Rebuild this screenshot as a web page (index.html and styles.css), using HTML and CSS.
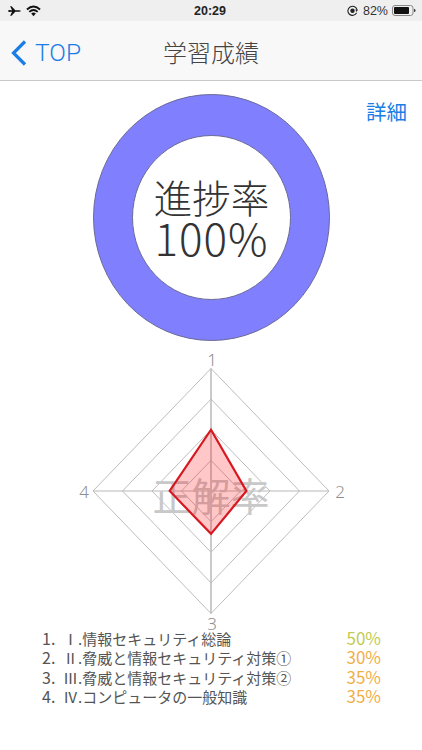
FILE: index.html
```html
<!DOCTYPE html>
<html lang="ja">
<head>
    <meta charset="UTF-8">
    <meta name="viewport" content="width=device-width, initial-scale=1.0">
    <title>学習成績</title>
    <link rel="stylesheet" href="styles.css">
</head>
<body>
    <div class="status-bar">
        <div class="status-left">
            <svg class="icon-plane" viewBox="0 0 16 12">
                <path d="M0 6 L1 4.800 L5 5 L2.600 0.300 L4.400 0.300 L9 5 L13.500 5 Q15.800 5.300 15.800 6 Q15.800 6.700 13.500 7 L9 7 L4.400 11.700 L2.600 11.700 L5 7 L1 7.200 Z"/>
            </svg>
            <svg class="icon-wifi" viewBox="0 0 16 12">
                <path class="wifi-arc" d="M1 4.400 Q8 -1.800 15 4.400"/>
                <path class="wifi-arc" d="M3.500 7 Q8 2.800 12.500 7"/>
                <path d="M5.500 8.700 Q8 6.400 10.500 8.700 L8 11.600 Z"/>
            </svg>
        </div>
        <div class="status-time">20:29</div>
        <div class="status-right">
            <svg class="icon-lock" viewBox="0 0 12 12">
                <path class="lock-ring" d="M10.500 8.500 A5 5 0 1 1 10.800 5"/>
                <path d="M9 5 L12 5 L10.500 7.500 Z"/>
                <circle cx="6" cy="6.200" r="2.400"/>
            </svg>
            <span>82%</span>
            <svg class="icon-battery" viewBox="0 0 24 11">
                <rect class="battery-shell" x="0.500" y="0.500" width="20.500" height="10" rx="2.500"/>
                <rect x="2" y="2" width="15" height="7" rx="1"/>
                <path d="M22.200 3.700 Q23.500 4.200 23.500 5.500 Q23.500 6.800 22.200 7.300 Z"/>
            </svg>
        </div>
    </div>

    <div class="nav-bar">
        <a class="nav-back">
            <svg class="icon-back" viewBox="0 0 18 28">
                <path d="M15 2.500 L3.500 14 L15 25.500"/>
            </svg>
            <span>TOP</span>
        </a>
        <div class="nav-title">学習成績</div>
    </div>

    <div class="content">
        <a class="detail-link">詳細</a>

        <div class="progress-chart">
            <svg viewBox="0 0 237 247">
                <ellipse class="ring" cx="118.500" cy="123.500" rx="118" ry="123"/>
                <ellipse class="ring-hole" cx="118.500" cy="123.500" rx="79" ry="82"/>
            </svg>
            <div class="progress-label">
                <div>進捗率</div>
                <div class="progress-value">100%</div>
            </div>
        </div>

        <div class="radar-chart">
            <svg viewBox="0 0 422 270">
                <g id="radar-grid"></g>
                <text class="radar-title" x="211" y="161">正解率</text>
                <polygon class="radar-data" id="radar-data"/>
                <text class="radar-axis" x="212" y="16">1</text>
                <text class="radar-axis" x="340" y="148">2</text>
                <text class="radar-axis" x="212" y="280">3</text>
                <text class="radar-axis" x="84" y="148">4</text>
            </svg>
        </div>

        <ol class="score-list" id="score-list"></ol>
    </div>

    <script>
        const scores = [
            { name: 'Ⅰ.情報セキュリティ総論', rate: 50, color: '#c3cb4f' },
            { name: 'Ⅱ.脅威と情報セキュリティ対策①', rate: 30, color: '#f2ae45' },
            { name: 'Ⅲ.脅威と情報セキュリティ対策②', rate: 35, color: '#f2ae45' },
            { name: 'Ⅳ.コンピュータの一般知識', rate: 35, color: '#f2ae45' }
        ];

        // chart centre and radius inside the radar svg
        const cx = 211, cy = 141, rx = 118, ry = 122.5;

        function point(axis, value) {
            const dx = [0, rx, 0, -rx][axis];
            const dy = [-ry, 0, ry, 0][axis];
            return (cx + dx * value) + ',' + (cy + dy * value);
        }

        const grid = document.getElementById('radar-grid');
        let gridHtml = '';
        [0.25, 0.5, 0.75, 1].forEach(level => {
            const points = [0, 1, 2, 3].map(axis => point(axis, level)).join(' ');
            gridHtml += '<polygon class="radar-ring" points="' + points + '"/>';
        });
        gridHtml += '<line class="radar-spoke" x1="' + cx + '" y1="' + (cy - ry) + '" x2="' + cx + '" y2="' + (cy + ry) + '"/>';
        gridHtml += '<line class="radar-spoke thin" x1="' + (cx - rx) + '" y1="' + cy + '" x2="' + (cx + rx) + '" y2="' + cy + '"/>';
        grid.innerHTML = gridHtml;

        document.getElementById('radar-data').setAttribute('points',
            scores.map((score, i) => point(i, score.rate / 100)).join(' '));

        const list = document.getElementById('score-list');
        scores.forEach((score, i) => {
            const row = document.createElement('li');
            row.innerHTML = '<span class="score-index">' + (i + 1) + '.</span>' +
                '<span class="score-name">' + score.name + '</span>' +
                '<span class="score-rate" style="color: ' + score.color + '">' + score.rate + '%</span>';
            list.appendChild(row);
        });
    </script>
</body>
</html>
```

FILE: styles.css
```css
html, body {
    margin: 0;
    padding: 0;
    height: 100%;
}
body {
    width: 422px;
    height: 750px;
    overflow: hidden;
    background-color: white;
    font-family: "Noto Sans CJK JP", "Noto Sans", sans-serif;
    font-weight: 300;
    color: #333;
}
.status-bar {
    height: 21px;
    background-color: #efefef;
    display: flex;
    justify-content: space-between;
    align-items: center;
    padding: 0 6px 0 8px;
    position: relative;
    font-family: "Liberation Sans", sans-serif;
    font-size: 12.500px;
    font-weight: 400;
    color: #111;
}
.status-left {
    display: flex;
    align-items: center;
    gap: 5px;
}
.status-right {
    display: flex;
    align-items: center;
    gap: 4px;
    color: #333;
}
.status-right span {
    margin-top: 1px;
}
.status-time {
    position: absolute;
    left: 194px;
    top: 4px;
    font-weight: 700;
    color: #222;
}
.icon-plane {
    width: 13px;
    height: 10px;
    fill: #111;
}
.icon-wifi {
    width: 15px;
    height: 12px;
    fill: #111;
}
.wifi-arc {
    fill: none;
    stroke: #111;
    stroke-width: 2;
}
.icon-lock {
    width: 11px;
    height: 11px;
    fill: #222;
    margin-right: 1px;
}
.lock-ring {
    fill: none;
    stroke: #222;
    stroke-width: 1.200;
}
.icon-battery {
    width: 24px;
    height: 11px;
    fill: #111;
}
.battery-shell {
    fill: none;
    stroke: #888;
    stroke-width: 1;
}
.nav-bar {
    height: 59px;
    background-color: #f8f8f8;
    border-bottom: 1px solid #c8c8c8;
    display: flex;
    align-items: center;
    justify-content: center;
    position: relative;
}
.nav-back {
    position: absolute;
    left: 10px;
    top: 17px;
    display: flex;
    align-items: center;
    gap: 7px;
    color: #1b7ee6;
    font-family: Roboto, sans-serif;
    font-weight: 300;
    font-size: 24.500px;
}
.icon-back {
    width: 18px;
    height: 28px;
    fill: none;
    stroke: #1b7ee6;
    stroke-width: 3.200;
}
.nav-title {
    font-size: 24px;
    color: #444;
    padding-top: 2px;
}
.content {
    position: relative;
    padding-top: 13px;
}
.detail-link {
    position: absolute;
    right: 15px;
    top: 15px;
    font-size: 20.500px;
    font-weight: 400;
    line-height: 30px;
    color: #1b7ee6;
}
.progress-chart {
    position: relative;
    width: 237px;
    height: 247px;
    margin: 0 auto;
    left: 0.500px;
}
.progress-chart svg {
    display: block;
    width: 237px;
    height: 247px;
}
.ring {
    fill: #8080ff;
    stroke: #6a6a96;
    stroke-width: 1;
}
.ring-hole {
    fill: white;
    stroke: #6a6a96;
    stroke-width: 1;
}
.progress-label {
    position: absolute;
    left: 0;
    right: 0;
    top: 80px;
    text-align: center;
    font-size: 38.500px;
    line-height: 44px;
    color: #333;
}
.progress-value {
    font-size: 44px;
    letter-spacing: 1px;
    margin-top: -3px;
}
.radar-chart {
    margin-top: 9px;
    height: 270px;
}
.radar-chart svg {
    display: block;
    width: 422px;
    height: 270px;
    overflow: visible;
}
.radar-ring {
    fill: none;
    stroke: #bdbdbd;
    stroke-width: 1;
}
.radar-spoke {
    stroke: #b8b8b8;
    stroke-width: 1.500;
}
.radar-spoke.thin {
    stroke-width: 1;
}
.radar-title {
    font-size: 39px;
    font-weight: 400;
    fill: #c8c8c8;
    text-anchor: middle;
}
.radar-data {
    fill: rgba(255, 0, 0, 0.22);
    stroke: #d81820;
    stroke-width: 2.200;
}
.radar-axis {
    font-family: "Noto Sans", sans-serif;
    font-size: 17px;
    fill: #8e8e8e;
    text-anchor: middle;
}
.score-list {
    list-style: none;
    margin: 8px 0 0;
    padding: 0 41px 0 42px;
    font-size: 15px;
    font-weight: 400;
    line-height: 19px;
    color: #555;
}
.score-list li {
    display: flex;
    align-items: baseline;
    height: 19.300px;
}
.score-index {
    width: 21px;
    font-size: 16px;
}
.score-name {
    flex: 1;
}
.score-rate {
    font-size: 17px;
}
```
